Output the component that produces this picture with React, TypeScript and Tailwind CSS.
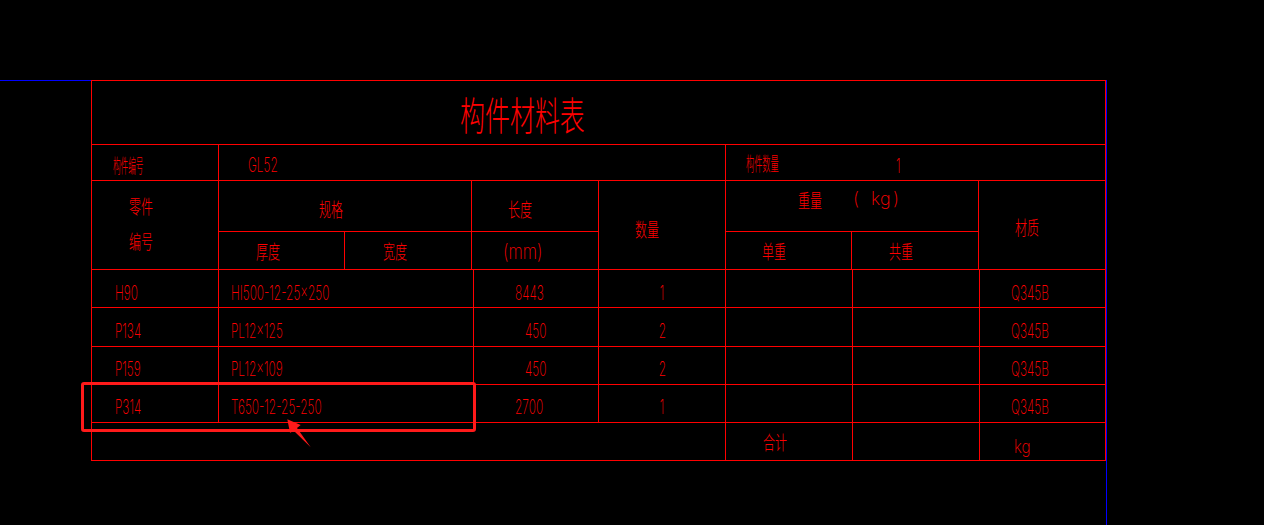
import React from "react";

const lat =
  "inline-block origin-left whitespace-nowrap leading-none text-[20.5px] font-extralight [transform:scaleX(0.58)]";
const latC =
  "inline-block origin-center whitespace-nowrap leading-none text-[20.5px] font-extralight [transform:scaleX(0.58)]";
const cjk =
  "inline-block origin-left whitespace-nowrap leading-none text-[19px] font-light [transform:scaleX(0.63)]";
const R = "border-[#ff0000]";

type DataRow = {
  id: string;
  spec: string;
  len: string;
  lenPad: string;
  qty: string;
  rowH: string;
  pt: string;
};

const rows: DataRow[] = [
  { id: "H90", spec: "HI500-12-25×250", len: "8443", lenPad: "pl-[41px]", qty: "1", rowH: "h-[38px]", pt: "pt-[12px]" },
  { id: "P134", spec: "PL12×125", len: "450", lenPad: "pl-[51px]", qty: "2", rowH: "h-[39px]", pt: "pt-[12px]" },
  { id: "P159", spec: "PL12×109", len: "450", lenPad: "pl-[51px]", qty: "2", rowH: "h-[38px]", pt: "pt-[11px]" },
  { id: "P314", spec: "T650-12-25-250", len: "2700", lenPad: "pl-[41px]", qty: "1", rowH: "h-[38px]", pt: "pt-[11px]" },
];

export default function App() {
  return (
    <div className="relative w-[1264px] h-[525px] overflow-hidden bg-black text-[#ff0000] font-[Inter,'Noto_Sans_CJK_SC',sans-serif]">
      <div className="mt-[80px] w-[1107px] h-[445px] border-t border-r border-[#0000ff]">
        <div className={"ml-[91px] -mt-px w-[1015px] border-t border-l border-r " + R}>
          {/* title */}
          <div className={"h-[64px] border-b " + R}>
            <div className="pl-[368px] pt-[15px]">
              <span className="inline-block origin-left whitespace-nowrap leading-none text-[39px] font-light [transform:scaleX(0.64)]">
                构件材料表
              </span>
            </div>
          </div>

          {/* member no row */}
          <div className={"flex h-[36px] border-b " + R}>
            <div className={"w-[127px] border-r pl-[21px] pt-[10px] " + R}>
              <span className="inline-block origin-left whitespace-nowrap leading-none text-[19px] font-light [transform:scaleX(0.4)]">
                构件编号
              </span>
            </div>
            <div className={"w-[507px] border-r pl-[29px] pt-[9px] " + R}>
              <span className={lat}>GL52</span>
            </div>
            <div className="flex flex-1">
              <div className="w-[160px] pl-[20px] pt-[8px]">
                <span className="inline-block origin-left whitespace-nowrap leading-none text-[19px] font-light [transform:scaleX(0.43)]">
                  构件数量
                </span>
              </div>
              <div className="pl-[10px] pt-[10px]">
                <span className={lat}>1</span>
              </div>
            </div>
          </div>

          {/* header */}
          <div className={"flex h-[89px] border-b " + R}>
            <div className={"w-[127px] border-r pl-[37px] pt-[15px] " + R}>
              <div>
                <span className={cjk}>零件</span>
              </div>
              <div className="mt-[11px]">
                <span className={cjk}>编号</span>
              </div>
            </div>
            <div className={"flex w-[253px] flex-col border-r " + R}>
              <div className={"h-[51px] border-b pl-[100px] pt-[18px] " + R}>
                <span className={cjk}>规格</span>
              </div>
              <div className="flex flex-1">
                <div className={"w-[126px] border-r pl-[37px] pt-[9px] " + R}>
                  <span className={cjk}>厚度</span>
                </div>
                <div className="flex-1 pl-[38px] pt-[9px]">
                  <span className={cjk}>宽度</span>
                </div>
              </div>
            </div>
            <div className={"flex w-[127px] flex-col border-r " + R}>
              <div className={"h-[51px] border-b pl-[36px] pt-[18px] " + R}>
                <span className={cjk}>长度</span>
              </div>
              <div className="flex-1 pl-[31px] pt-[9px]">
                <span className="inline-block origin-left whitespace-nowrap leading-none text-[20.5px] font-extralight [transform:scaleX(0.8)]">
                  (mm)
                </span>
              </div>
            </div>
            <div className={"w-[127px] border-r pl-[36px] pt-[38px] " + R}>
              <span className={cjk}>数量</span>
            </div>
            <div className={"flex w-[253px] flex-col border-r " + R}>
              <div className={"flex h-[51px] border-b " + R}>
                <div className="w-[120px] pl-[72px] pt-[9px]">
                  <span className={cjk}>重量</span>
                </div>
                <div className="flex pl-[7px] pt-[9px] text-[18px] font-extralight leading-none">
                  <span className="w-[18px]">(</span>
                  <span className="w-[9px]">k</span>
                  <span className="w-[13px]">g</span>
                  <span>)</span>
                </div>
              </div>
              <div className="flex flex-1">
                <div className={"w-[126px] border-r pl-[36px] pt-[9px] " + R}>
                  <span className={cjk}>单重</span>
                </div>
                <div className="flex-1 pl-[37px] pt-[9px]">
                  <span className={cjk}>共重</span>
                </div>
              </div>
            </div>
            <div className="flex-1 pl-[36px] pt-[36px]">
              <span className={cjk}>材质</span>
            </div>
          </div>

          {/* data rows */}
          {rows.map((r) => (
            <div key={r.id} className={"flex border-b " + r.rowH + " " + R}>
              <div className={"w-[127px] border-r pl-[23px] " + r.pt + " " + R}>
                <span className={lat}>{r.id}</span>
              </div>
              <div className={"w-[255px] border-r pl-[12px] " + r.pt + " " + R}>
                <span className={lat}>{r.spec}</span>
              </div>
              <div className={"w-[125px] border-r " + r.lenPad + " " + r.pt + " " + R}>
                <span className={lat}>{r.len}</span>
              </div>
              <div className={"w-[127px] border-r text-center " + r.pt + " " + R}>
                <span className={latC}>{r.qty}</span>
              </div>
              <div className={"w-[127px] border-r " + R} />
              <div className={"w-[127px] border-r " + R} />
              <div className={"flex-1 pl-[31px] " + r.pt}>
                <span className={lat}>Q345B</span>
              </div>
            </div>
          ))}

          {/* total row */}
          <div className={"flex h-[38px] border-b " + R}>
            <div className={"w-[634px] border-r " + R} />
            <div className={"w-[127px] border-r pl-[37px] pt-[9px] " + R}>
              <span className={cjk}>合计</span>
            </div>
            <div className={"w-[127px] border-r " + R} />
            <div className="flex-1 pl-[34px] pt-[12px]">
              <span className="inline-block origin-left whitespace-nowrap leading-none text-[18px] font-extralight [transform:scaleX(0.85)]">
                kg
              </span>
            </div>
          </div>
        </div>
      </div>

      {/* annotation */}
      <div className="absolute left-[81px] top-[382px] h-[50px] w-[395px] rounded-[3px] border-[3px] border-[#ff1a1a]" />
      <svg
        className="absolute left-[280px] top-[410px]"
        width="40"
        height="45"
        viewBox="0 0 40 45"
      >
        <polygon
          points="7.3,9.3 20.7,15 17,18 30.7,37.3 14,21 10,22.7"
          fill="#ff1a1a"
        />
      </svg>
    </div>
  );
}
